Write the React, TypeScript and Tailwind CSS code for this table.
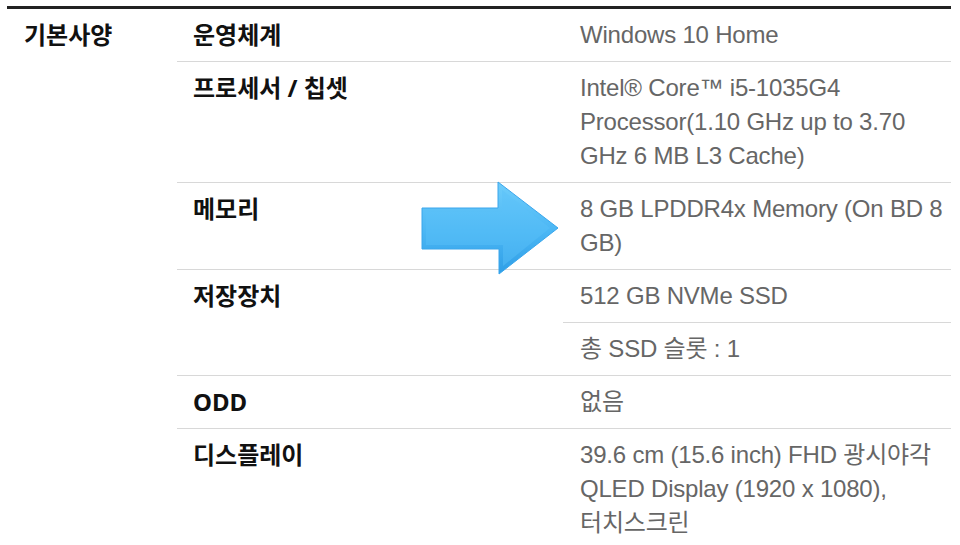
const label = "font-['Noto_Sans','Noto_Sans_CJK_KR',sans-serif] font-bold text-[24px] leading-[34px] text-[#111]";
const value = "font-['Liberation_Sans','Noto_Sans_CJK_KR',sans-serif] text-[24px] leading-[34px] text-[#666] tracking-[-0.2px]";

type Spec = { name: string; lines: string[][] };

const specs: Spec[] = [
  { name: "운영체계", lines: [["Windows 10 Home"]] },
  {
    name: "프로세서 / 칩셋",
    lines: [["Intel® Core™ i5-1035G4", "Processor(1.10 GHz up to 3.70", "GHz 6 MB L3 Cache)"]],
  },
  { name: "메모리", lines: [["8 GB LPDDR4x Memory (On BD 8", "GB)"]] },
  { name: "저장장치", lines: [["512 GB NVMe SSD"], ["총 SSD 슬롯 : 1"]] },
  { name: "ODD", lines: [["없음"]] },
  {
    name: "디스플레이",
    lines: [["39.6 cm (15.6 inch) FHD 광시야각", "QLED Display (1920 x 1080),", "터치스크린"]],
  },
];

function Arrow() {
  return (
    <svg
      className="absolute left-[418px] top-[179px]"
      width="146"
      height="100"
      viewBox="418 179 146 100"
    >
      <defs>
        <linearGradient id="ag" x1="0" y1="0" x2="0" y2="1">
          <stop offset="0" stopColor="#6fcdfb" />
          <stop offset="0.55" stopColor="#4ab6f4" />
          <stop offset="1" stopColor="#2f9ee6" />
        </linearGradient>
      </defs>
      <path
        d="M422 208 L498 208 L498 182 L558 228 L499 274 L499 249 L422 249 Z"
        fill="url(#ag)"
        stroke="#3aa6ec"
        strokeWidth="1"
        strokeLinejoin="round"
      />
      <path d="M426 212 L502 212 L502 190 L550 228 L503 266 L503 245 L426 245 Z" fill="#5cc0f8" opacity="0.45" />
    </svg>
  );
}

export default function App() {
  return (
    <div className="relative h-[545px] w-[960px] overflow-hidden bg-white">
      <div className="ml-[7px] mt-[6px] w-[944px] border-t-[3px] border-[#222]">
        <div className="flex">
          <div className="w-[170px] shrink-0 pl-[17px] pt-[9px]">
            <div className={label}>기본사양</div>
          </div>
          <div className="flex-1">
            {specs.map((s, i) => (
              <div key={s.name} className={i > 0 ? "flex border-t border-[#d8d8d8]" : "flex"}>
                <div className="w-[386px] shrink-0 pl-4 pt-[9px] pb-[9px]">
                  <div className={label}>{s.name}</div>
                </div>
                <div className="flex-1">
                  {s.lines.map((group, j) => (
                    <div
                      key={j}
                      className={j > 0 ? "border-t border-[#d8d8d8] pl-[17px] pt-[9px] pb-[9px]" : "pl-[17px] pt-[9px] pb-[9px]"}
                    >
                      {group.map((line) => (
                        <div key={line} className={value + " whitespace-nowrap"}>
                          {line}
                        </div>
                      ))}
                    </div>
                  ))}
                </div>
              </div>
            ))}
          </div>
        </div>
      </div>
      <Arrow />
    </div>
  );
}
